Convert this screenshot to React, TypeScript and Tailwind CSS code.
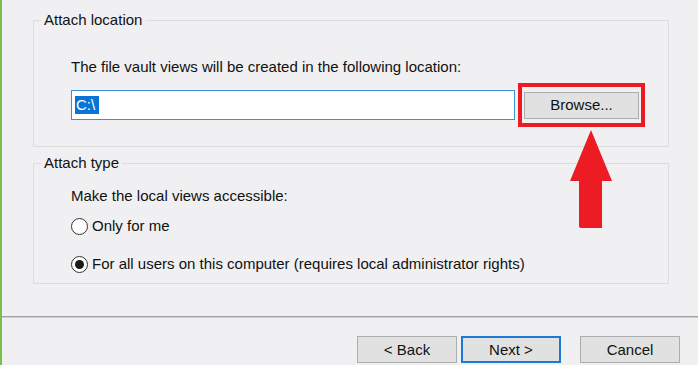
import React from 'react';

function RadioOption({ label, checked }: { label: string; checked?: boolean }) {
  return (
    <label className="flex items-center gap-[4px]">
      <span className="w-[17px] h-[17px] rounded-full border border-[#333333] bg-white flex items-center justify-center">
        {checked && <span className="w-[9px] h-[9px] rounded-full bg-[#1a1a1a]"></span>}
      </span>
      <span>{label}</span>
    </label>
  );
}

function WinButton({ label, primary }: { label: string; primary?: boolean }) {
  return (
    <button
      className={
        primary
          ? 'w-[100px] h-[27px] bg-[#e1e1e1] border-2 border-[#1c7ad6] text-[#111]'
          : 'w-[100px] h-[27px] bg-[#e1e1e1] border border-[#adadad] text-[#111]'
      }
    >
      {label}
    </button>
  );
}

export default function App() {
  return (
    <div className="relative w-[698px] h-[365px] overflow-hidden bg-[#f0f0f2] border-l-2 border-[#74c14f] font-['Liberation_Sans',Arial,sans-serif] text-[15px] leading-[18px] text-[#111]">
      <div className="pt-[11px] pl-[31px]">
        <fieldset className="w-[636px] border border-[#dcdcdc]">
          <legend className="ml-[7px] px-[3px]">Attach location</legend>
          <div className="pl-[37px] pt-[29px] pb-[19px]">
            <p>The file vault views will be created in the following location:</p>
            <div className="mt-[7px] flex items-center">
              <div className="w-[444px] h-[30px] bg-white border border-[#3c8fd6] flex items-center pl-[3px]">
                <span className="inline-block w-[24px] bg-[#0a74d6] text-white leading-[18px] pl-[1px]">C:\</span>
              </div>
              <div className="ml-[3px] w-[127px] h-[44px] border-4 border-[#ed1c24] flex items-center justify-center">
                <button className="w-[115px] h-[27px] bg-[#e1e1e1] border border-[#adadad] text-[#111]">Browse...</button>
              </div>
            </div>
          </div>
        </fieldset>

        <fieldset className="mt-[7px] w-[636px] border border-[#dcdcdc]">
          <legend className="ml-[7px] px-[3px]">Attach type</legend>
          <div className="pl-[37px] pt-[15px] pb-[10px]">
            <p>Make the local views accessible:</p>
            <div className="mt-[12px]">
              <RadioOption label="Only for me" />
            </div>
            <div className="mt-[20px]">
              <RadioOption label="For all users on this computer (requires local administrator rights)" checked />
            </div>
          </div>
        </fieldset>
      </div>

      <div className="mt-[32px] h-[1px] bg-[#a0a0a0]"></div>
      <div className="h-[1px] bg-[#cfcfcf]"></div>

      <div className="mt-[18px] pl-[355px] flex">
        <WinButton label="< Back" />
        <div className="ml-[4px]">
          <WinButton label="Next >" primary />
        </div>
        <div className="ml-[19px]">
          <WinButton label="Cancel" />
        </div>
      </div>

      <svg className="absolute left-[568px] top-[130px]" width="42" height="98" viewBox="0 0 42 98">
        <path d="M21 0 L42 51 L32 51 L32 98 L11 98 Q9 98 9 96 L9 51 L0 51 Z" fill="#ed1c24" />
      </svg>
    </div>
  );
}
